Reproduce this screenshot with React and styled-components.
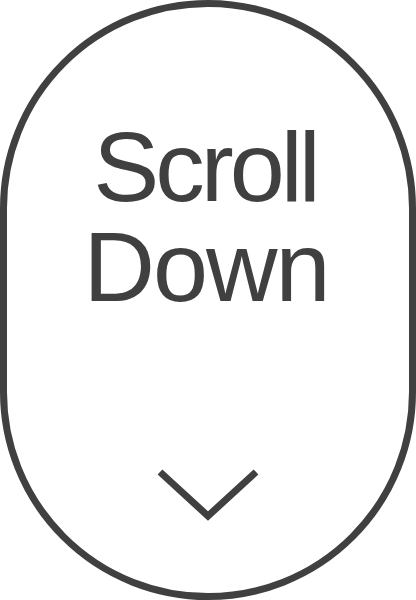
import React from "react";
import styled, { createGlobalStyle } from "styled-components";

const GlobalStyle = createGlobalStyle`
  html, body {
    margin: 0;
    padding: 0;
    background: #ffffff;
  }
`;

const Pill = styled.div`
  width: 416px;
  height: 600px;
  box-sizing: border-box;
  border: 7px solid #404040;
  border-radius: 208px;
  display: flex;
  flex-direction: column;
  align-items: center;
  padding-top: 110px;
  background: #ffffff;
`;

const Label = styled.div`
  font-family: "Liberation Sans", Arial, sans-serif;
  font-size: 99px;
  line-height: 100px;
  color: #404040;
  text-align: center;
`;

const Line = styled.div`
  display: block;
  letter-spacing: ${(props) => props.$tight}px;
  padding-right: ${(props) => -props.$tight + 2}px;
`;

const Chevron = styled.svg`
  margin-top: 151px;
  display: block;
`;

export default function App() {
  return (
    <>
      <GlobalStyle />
      <Pill>
        <Label>
          <Line $tight={-4}>Scroll</Line>
          <Line $tight={-2}>Down</Line>
        </Label>
        <Chevron width="104" height="56" viewBox="0 0 104 56">
          <path
            d="M4 4 L52 48 L100 4"
            fill="none"
            stroke="#404040"
            strokeWidth="7"
          />
        </Chevron>
      </Pill>
    </>
  );
}
